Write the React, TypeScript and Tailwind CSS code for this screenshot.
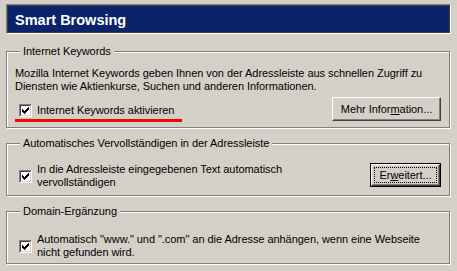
import React from 'react';

// Windows 2000 "classic" preference panel: Smart Browsing

const Check: React.FC = () => (
  <svg width="7" height="7" viewBox="0 0 7 7" shapeRendering="crispEdges" className="block">
    <path
      fill="#000"
      d="M6 0h1v3H6zM5 1h1v3H5zM0 2h1v3H0zM1 3h1v3H1zM2 4h1v3H2zM3 3h1v3H3zM4 2h1v3H4z"
    />
  </svg>
);

const Checkbox: React.FC = () => (
  <div className="w-[13px] h-[13px] shrink-0 border border-t-[#808080] border-l-[#808080] border-b-white border-r-white">
    <div className="w-full h-full flex items-center justify-center bg-white border border-t-[#404040] border-l-[#404040] border-b-[#d4d0c8] border-r-[#d4d0c8]">
      <Check />
    </div>
  </div>
);

const Button: React.FC<{ children: React.ReactNode; width: string; isDefault?: boolean }> = ({
  children,
  width,
  isDefault,
}) => {
  if (isDefault) {
    return (
      <div className={`${width} h-[24px] shrink-0 border border-black`}>
        <div className="h-full border border-t-white border-l-white border-b-[#404040] border-r-[#404040] shadow-[inset_-1px_-1px_0_#808080] p-[2px]">
          <div className="h-full flex items-center justify-center border border-dotted border-black">
            {children}
          </div>
        </div>
      </div>
    );
  }
  return (
    <div
      className={`${width} h-[24px] shrink-0 flex items-center justify-center border border-t-white border-l-white border-b-[#404040] border-r-[#404040] shadow-[inset_-1px_-1px_0_#808080]`}
    >
      {children}
    </div>
  );
};

const GroupBox: React.FC<{ title: string; className?: string; children: React.ReactNode }> = ({
  title,
  className = '',
  children,
}) => (
  <fieldset
    className={`w-[444px] border border-[#808080] shadow-[inset_1px_1px_0_#fff,1px_1px_0_#fff] px-[8px] ${className}`}
  >
    <legend className="ml-[5px] px-[3px] bg-[#d4d0c8] leading-[13px]">{title}</legend>
    {children}
  </fieldset>
);

export default function App() {
  return (
    <div className="w-[457px] h-[271px] overflow-hidden bg-[#d4d0c8] pt-[4px] px-[6px] text-[11px] leading-[13px] tracking-[-0.05px] text-black font-['Liberation_Sans',Arial,sans-serif]">
      {/* Title bar */}
      <div className="h-[30px] border border-t-[#808080] border-l-[#808080] border-b-white border-r-white">
        <div className="h-full bg-[#0a246a] border border-t-[#404040] border-l-[#404040] border-b-[#404040] border-r-[#404040] pl-[7px] pt-[6px]">
          <span className="text-white font-bold text-[14.5px] leading-[17px] tracking-normal">
            Smart Browsing
          </span>
        </div>
      </div>

      {/* Internet Keywords */}
      <GroupBox title="Internet Keywords" className="mt-[11px] pt-[9px] pb-[5px]">
        <p>
          Mozilla Internet Keywords geben Ihnen von der Adressleiste aus schnellen Zugriff zu
          <br />
          Diensten wie Aktienkurse, Suchen und anderen Informationen.
        </p>
        <div className="mt-[4px] flex items-start justify-between">
          <div className="pt-[7px]">
            <div className="flex items-center gap-[5px] pl-[4px]">
              <Checkbox />
              <span>Internet Keywords aktivieren</span>
            </div>
            <div className="mt-[2px] h-[3px] w-[167px] bg-[#ff0000]" />
          </div>
          <Button width="w-[109px]">
            <span>
              Mehr Infor<u>m</u>ation...
            </span>
          </Button>
        </div>
      </GroupBox>

      {/* Automatisches Vervollständigen */}
      <GroupBox
        title="Automatisches Vervollständigen in der Adressleiste"
        className="mt-[9px] pt-[13px] pb-[6px]"
      >
        <div className="flex items-start justify-between">
          <div className="flex items-center gap-[5px] pl-[4px]">
            <Checkbox />
            <span>
              In die Adressleiste eingegebenen Text automatisch
              <br />
              vervollständigen
            </span>
          </div>
          <Button width="w-[71px]" isDefault>
            <span>
              Er<u>w</u>eitert...
            </span>
          </Button>
        </div>
      </GroupBox>

      {/* Domain-Ergänzung */}
      <GroupBox title="Domain-Ergänzung" className="mt-[9px] pt-[15px] pb-[4px]">
        <div className="flex items-center gap-[5px] pl-[4px]">
          <Checkbox />
          <span>
            Automatisch "www." und ".com" an die Adresse anhängen, wenn eine Webseite
            <br />
            nicht gefunden wird.
          </span>
        </div>
      </GroupBox>
    </div>
  );
}
